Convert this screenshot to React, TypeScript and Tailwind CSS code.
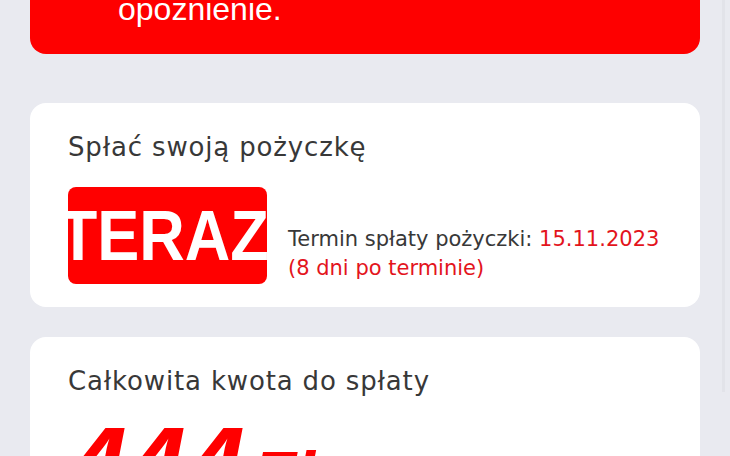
import React from "react";

const roundSans = { fontFamily: "'DejaVu Sans', 'Noto Sans', sans-serif" };
const arial = { fontFamily: "'Liberation Sans', Arial, sans-serif" };

function OverdueBanner() {
  return (
    <div className="mx-[30px] rounded-b-[16px] bg-[#fe0000] pb-[29px] pl-[88px]">
      <p className="-mt-[7px] text-[32px] leading-[32px] text-white" style={arial}>
        opoznienie.
      </p>
    </div>
  );
}

function RepayCard() {
  return (
    <div className="mx-[30px] mt-[49px] rounded-[16px] bg-white px-[38px] pt-[28px] pb-[23px]">
      <h2 className="text-[26px] leading-[32px] tracking-[0.85px] text-[#383838]" style={roundSans}>
        Spłać swoją pożyczkę
      </h2>
      <div className="mt-[24px] flex items-end gap-[21px]">
        <div className="flex h-[97px] w-[199px] shrink-0 items-center justify-center overflow-hidden rounded-[8px] bg-[#ff0000]">
          <span
            className="inline-block -translate-x-[4px] scale-x-[0.9] text-[70px] font-bold leading-none text-white"
            style={arial}
          >
            TERAZ
          </span>
        </div>
        <p
          className="mb-[1px] whitespace-nowrap text-[21px] leading-[29px] text-[#383838]"
          style={roundSans}
        >
          Termin spłaty pożyczki: <span className="text-[#e3141c]">15.11.2023</span>
          <br />
          <span className="text-[#e3141c]">(8 dni po terminie)</span>
        </p>
      </div>
    </div>
  );
}

function TotalCard() {
  return (
    <div className="mx-[30px] mt-[30px] h-[200px] rounded-[16px] bg-white px-[38px] pt-[28px]">
      <h2 className="text-[26px] leading-[32px] tracking-[0.85px] text-[#383838]" style={roundSans}>
        Całkowita kwota do spłaty
      </h2>
      <div className="mt-[14px] flex items-baseline italic font-bold text-[#ff0000]" style={arial}>
        <span className="text-[106px] leading-none">444</span>
        <span className="ml-[8px] text-[70px] leading-none">Zł</span>
      </div>
    </div>
  );
}

export default function App() {
  return (
    <div className="relative h-[456px] w-[730px] overflow-hidden bg-[#e9eaf0]">
      <OverdueBanner />
      <RepayCard />
      <TotalCard />
      {/* scrollbar thumb */}
      <div className="absolute right-[5px] top-0 h-[392px] w-[3px] bg-[#e2e3e9]" />
    </div>
  );
}
